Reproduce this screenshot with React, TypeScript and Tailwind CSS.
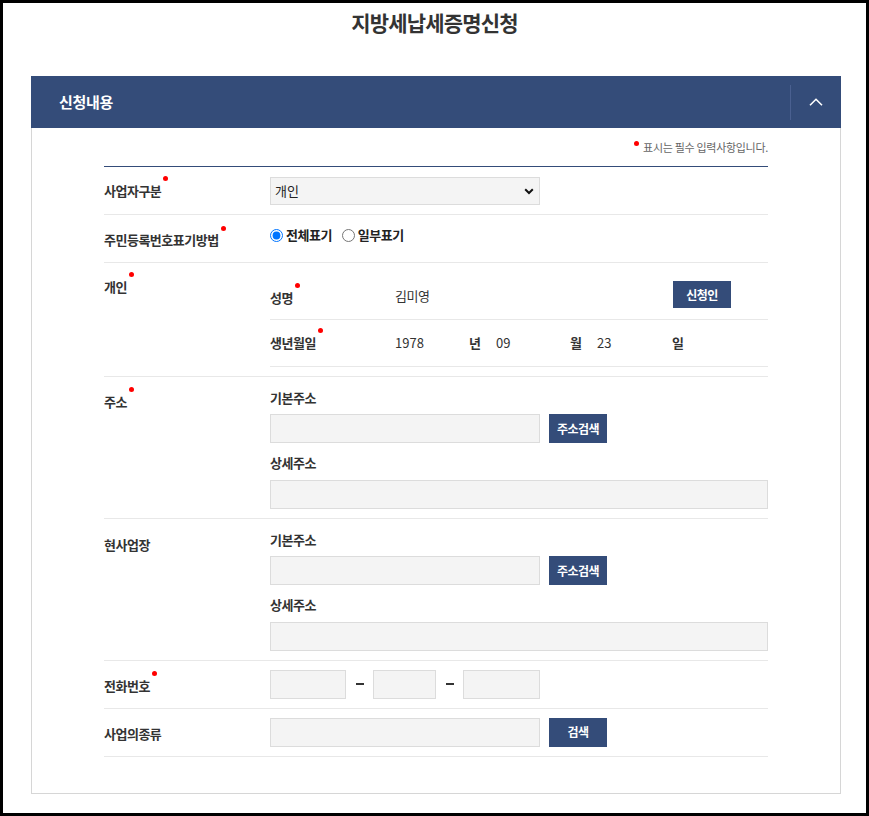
import React from "react"

const NAVY = "bg-[#344c79]"

function Req({ children }: { children: React.ReactNode }) {
  return (
    <span className="relative">
      {children}
      <span className="absolute -right-[7px] -top-[5px] w-[5px] h-[5px] rounded-full bg-[#ff0000]" />
    </span>
  )
}

function Btn({ children, className = "" }: { children: React.ReactNode; className?: string }) {
  return (
    <button
      type="button"
      className={`${NAVY} text-white text-[12px] font-bold tracking-[-0.5px] leading-none flex items-center justify-center shrink-0 ${className}`}
    >
      {children}
    </button>
  )
}

function Field({ className = "" }: { className?: string }) {
  return <input type="text" className={`h-[29px] bg-[#f4f4f4] border border-[#dcdcdc] outline-none ${className}`} />
}

function AddressBlock() {
  return (
    <div className="flex-1 pt-[12px] pb-[9px]">
      <div className="leading-[18px] text-[13px] font-bold tracking-[-0.5px] text-[#333]">기본주소</div>
      <div className="flex gap-[9px] mt-[7px]">
        <Field className="w-[270px]" />
        <Btn className="w-[58px] h-[29px]">주소검색</Btn>
      </div>
      <div className="leading-[18px] text-[13px] font-bold tracking-[-0.5px] text-[#333] mt-[11px]">상세주소</div>
      <Field className="w-full mt-[8px] block" />
    </div>
  )
}

export default function App() {
  const label = "w-[166px] shrink-0 text-[13px] font-bold tracking-[-0.5px] text-[#333] leading-[18px]"
  const row = "flex border-b border-[#e8e8e8]"

  return (
    <div className="w-[869px] h-[816px] bg-white border-black border-t-[3px] border-l-[3px] border-r-[3px] border-b-[3px] overflow-hidden font-['Noto_Sans_CJK_KR',sans-serif] text-[#333]">
      <h1 className="text-center text-[21px] font-bold leading-[30px] pt-[4px] tracking-[-0.8px] text-[#333]">
        지방세납세증명신청
      </h1>

      <div className="mt-[39px] ml-[28px] w-[810px]">
        {/* section header */}
        <div className={`${NAVY} h-[52px] flex items-center`}>
          <div className="flex-1 pl-[28px] text-white text-[15px] font-bold tracking-[-0.3px]">신청내용</div>
          <div className="w-px h-[35px] bg-[#4a6090]" />
          <div className="w-[50px] flex items-center justify-center pb-[1px]">
            <svg width="14" height="8" viewBox="0 0 14 8" fill="none">
              <path d="M1 7.2 7 1.3l6 5.9" stroke="#fff" strokeWidth="1.6" />
            </svg>
          </div>
        </div>

        <div className="h-[666px] border border-t-0 border-[#d6d6d6] px-[72px]">
          <div className="h-[38px] pt-[11px] flex justify-end">
            <span className="text-[11px] leading-[16px] text-[#666] tracking-[-0.3px]">
              <span className="inline-block w-[5px] h-[5px] rounded-full bg-[#ff0000] mr-[4px] -translate-y-[6px]" />
              표시는 필수 입력사항입니다.
            </span>
          </div>

          <div className="border-t border-[#344c79]">
            {/* 사업자구분 */}
            <div className={`${row} h-[48px] items-center`}>
              <div className={label}>
                <Req>사업자구분</Req>
              </div>
              <div className="relative w-[270px]">
                <select className="appearance-none w-full h-[28px] bg-[#f4f4f4] border border-[#dcdcdc] pl-[4px] text-[13px] text-[#222] outline-none">
                  <option>개인</option>
                  <option>법인</option>
                </select>
                <svg className="absolute right-[6px] top-[11px] pointer-events-none" width="10" height="7" viewBox="0 0 10 7" fill="none">
                  <path d="M1.2 1.3 5 5l3.8-3.7" stroke="#111" strokeWidth="2" />
                </svg>
              </div>
            </div>

            {/* 주민등록번호표기방법 */}
            <div className={`${row} h-[48px]`}>
              <div className={`${label} flex items-center pt-[3px]`}>
                <Req>주민등록번호표기방법</Req>
              </div>
              <div className="flex items-center pb-[7px] text-[13px] font-bold tracking-[-0.5px] text-[#222]">
                <input type="radio" name="rrn" defaultChecked className="m-0 w-[13px] h-[13px]" />
                <span className="ml-[3px]">전체표기</span>
                <input type="radio" name="rrn" className="m-0 ml-[10px] w-[13px] h-[13px]" />
                <span className="ml-[3px]">일부표기</span>
              </div>
            </div>

            {/* 개인 */}
            <div className={row}>
              <div className={`${label} pt-[15px]`}>
                <Req>개인</Req>
              </div>
              <div className="flex-1 pt-[10px] pb-[9px]">
                <div className="h-[47px] flex items-center border-b border-[#e8e8e8]">
                  <div className="w-[125px] text-[13px] font-bold tracking-[-0.5px] pt-[3px]">
                    <Req>성명</Req>
                  </div>
                  <div className="w-[278px] text-[13px] tracking-[-0.5px] text-[#333]">김미영</div>
                  <Btn className="w-[58px] h-[27px] mb-[3px]">신청인</Btn>
                </div>
                <div className="h-[47px] flex items-center border-b border-[#e8e8e8] text-[13px]">
                  <div className="w-[125px] font-bold tracking-[-0.5px]">
                    <Req>생년월일</Req>
                  </div>
                  <div className="w-[74px] text-[#333]">1978</div>
                  <div className="w-[27px] font-bold">년</div>
                  <div className="w-[74px] text-[#333]">09</div>
                  <div className="w-[27px] font-bold">월</div>
                  <div className="w-[75px] text-[#333]">23</div>
                  <div className="font-bold">일</div>
                </div>
              </div>
            </div>

            {/* 주소 */}
            <div className={row}>
              <div className={`${label} pt-[16px]`}>
                <Req>주소</Req>
              </div>
              <AddressBlock />
            </div>

            {/* 현사업장 */}
            <div className={row}>
              <div className={`${label} pt-[17px]`}>현사업장</div>
              <AddressBlock />
            </div>

            {/* 전화번호 */}
            <div className={`${row} h-[48px] items-center`}>
              <div className={`${label} pt-[2px]`}>
                <Req>전화번호</Req>
              </div>
              <div className="flex items-center mb-[1px]">
                <Field className="w-[76px]" />
                <span className="w-[27px] flex justify-center">
                  <span className="w-[8px] h-[2px] bg-[#333]" />
                </span>
                <Field className="w-[63px]" />
                <span className="w-[27px] flex justify-center">
                  <span className="w-[8px] h-[2px] bg-[#333]" />
                </span>
                <Field className="w-[77px]" />
              </div>
            </div>

            {/* 사업의종류 */}
            <div className={`${row} h-[48px] items-center`}>
              <div className={`${label} pt-[3px]`}>사업의종류</div>
              <div className="flex gap-[9px] mb-[1px]">
                <Field className="w-[270px]" />
                <Btn className="w-[58px] h-[29px]">검색</Btn>
              </div>
            </div>
          </div>
        </div>
      </div>
    </div>
  )
}
